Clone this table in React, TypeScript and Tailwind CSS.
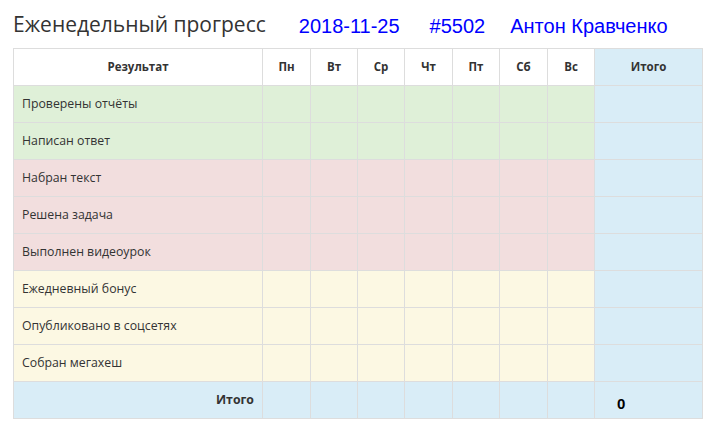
const days = ["Пн", "Вт", "Ср", "Чт", "Пт", "Сб", "Вс"];

const rows: { label: string; bg: string }[] = [
  { label: "Проверены отчёты", bg: "bg-[#dff0d8]" },
  { label: "Написан ответ", bg: "bg-[#dff0d8]" },
  { label: "Набран текст", bg: "bg-[#f2dede]" },
  { label: "Решена задача", bg: "bg-[#f2dede]" },
  { label: "Выполнен видеоурок", bg: "bg-[#f2dede]" },
  { label: "Ежедневный бонус", bg: "bg-[#fcf8e3]" },
  { label: "Опубликовано в соцсетях", bg: "bg-[#fcf8e3]" },
  { label: "Собран мегахеш", bg: "bg-[#fcf8e3]" },
];

const dayWidths = ["w-[48px]", "w-[47px]", "w-[47px]", "w-[48px]", "w-[47px]", "w-[48px]", "w-[47px]"];

export default function App() {
  return (
    <div className="min-h-[429px] w-[722px] bg-white font-['Open_Sans',sans-serif] text-[#333]">
      <div className="flex h-[48px] items-center pl-[13px]">
        <h3 className="text-[21px] leading-none text-[#333]">Еженедельный прогресс</h3>
        <div className="ml-[33px] mt-[4px] flex font-['Liberation_Sans',Arial,sans-serif] text-[20px] leading-none text-[#0000ff]">
          <span>2018-11-25</span>
          <span className="ml-[30px]">#5502</span>
          <span className="ml-[25px]">Антон Кравченко</span>
        </div>
      </div>
      <table className="ml-[13px] w-[689px] table-fixed border-collapse border border-[#ddd] text-[12.3px]">
        <colgroup>
          <col className="w-[249px]" />
          {dayWidths.map((w, i) => (
            <col key={i} className={w} />
          ))}
          <col className="w-[108px]" />
        </colgroup>
        <thead>
          <tr className="h-[37px]">
            <th className="border border-[#ddd] px-2 text-center text-[11.5px] font-bold">Результат</th>
            {days.map((d) => (
              <th key={d} className="border border-[#ddd] px-2 text-center text-[11.5px] font-bold">
                {d}
              </th>
            ))}
            <th className="border border-[#ddd] bg-[#d9edf7] px-2 text-center text-[11.5px] font-bold">Итого</th>
          </tr>
        </thead>
        <tbody>
          {rows.map((r) => (
            <tr key={r.label} className={`h-[37px] ${r.bg}`}>
              <td className="border border-[#ddd] px-2">{r.label}</td>
              {days.map((d) => (
                <td key={d} className="border border-[#ddd]" />
              ))}
              <td className="border border-[#ddd] bg-[#d9edf7]" />
            </tr>
          ))}
          <tr className="h-[37px] bg-[#d9edf7]">
            <td className="border border-[#ddd] px-2 text-right font-bold">Итого</td>
            {days.map((d) => (
              <td key={d} className="border border-[#ddd]" />
            ))}
            <td className="border border-[#ddd] pl-[22px] pt-[8px] font-['Liberation_Sans',Arial,sans-serif] text-[15px] font-bold text-black">
              0
            </td>
          </tr>
        </tbody>
      </table>
    </div>
  );
}
